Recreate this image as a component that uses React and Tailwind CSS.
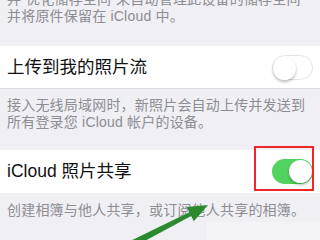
import React from 'react';

const font = { fontFamily: '"Liberation Sans", "Noto Sans CJK SC", sans-serif' };

function Toggle({ on }) {
    return (
        <div
            className={`relative w-[41px] h-[25px] rounded-full ${
                on ? 'bg-[#52d25e]' : 'bg-white border border-[#e3e3e6]'
            }`}
        >
            <div
                className={`absolute top-[1px] w-[23px] h-[23px] rounded-full bg-white shadow-[0_2px_3px_rgba(0,0,0,0.25)] ${
                    on ? 'right-[1px]' : 'left-[0px] top-[0px]'
                }`}
            />
        </div>
    );
}

export default function App() {
    return (
        <div className="relative w-[320px] h-[240px] overflow-hidden bg-[#efeff4]" style={font}>
            {/* top footer, partially scrolled off */}
            <div className="h-[46px] -mt-[9px] pl-[7px] text-[14px] leading-[17px] text-[#8d8d92] tracking-[0.2px]">
                <div className="whitespace-nowrap">并“优化储存空间”来自动管理此设备的储存空间</div>
                <div className="whitespace-nowrap">并将原件保留在 iCloud 中。</div>
            </div>

            <div className="mt-[9px] h-[43px] bg-white flex items-center justify-between pl-[7px] pr-[7px] border-b border-[#dcdce0]">
                <span className="text-[17.5px] text-[#111]">上传到我的照片流</span>
                <Toggle on={false} />
            </div>

            <div className="h-[61px] pl-[7px] pt-[8px] text-[14px] leading-[17px] text-[#8d8d92] tracking-[0.2px]">
                <div className="whitespace-nowrap">接入无线局域网时，新照片会自动上传并发送到</div>
                <div className="whitespace-nowrap">所有登录您 iCloud 帐户的设备。</div>
            </div>

            <div className="h-[43px] bg-white flex items-center justify-between pl-[7px] pr-[7px]">
                <span className="text-[17.5px] text-[#111]">iCloud 照片共享</span>
                <div className="relative">
                    <Toggle on={true} />
                    <div className="absolute -left-[18px] -top-[13px] w-[60px] h-[45px] border-2 border-[#f0262b]" />
                </div>
            </div>

            <div className="pl-[7px] pt-[9px] text-[14px] leading-[17px] text-[#8d8d92] tracking-[0.2px]">
                <div className="whitespace-nowrap">创建相簿与他人共享，或订阅他人共享的相簿。</div>
            </div>

            {/* faint watermark */}
            <div className="absolute left-[207px] top-[222px] w-[113px] h-[18px] bg-[#f4f4f7]" />

            {/* green arrow */}
            <svg className="absolute left-0 top-0" width="320" height="240" viewBox="0 0 320 240">
                <path
                    d="M128.4 241.9 L189.3 212.3 L186.6 207 L208 205 L193.8 221.2 L191.1 215.9 L131.6 248.1 Z"
                    fill="#2a8a2e"
                />
            </svg>
        </div>
    );
}
